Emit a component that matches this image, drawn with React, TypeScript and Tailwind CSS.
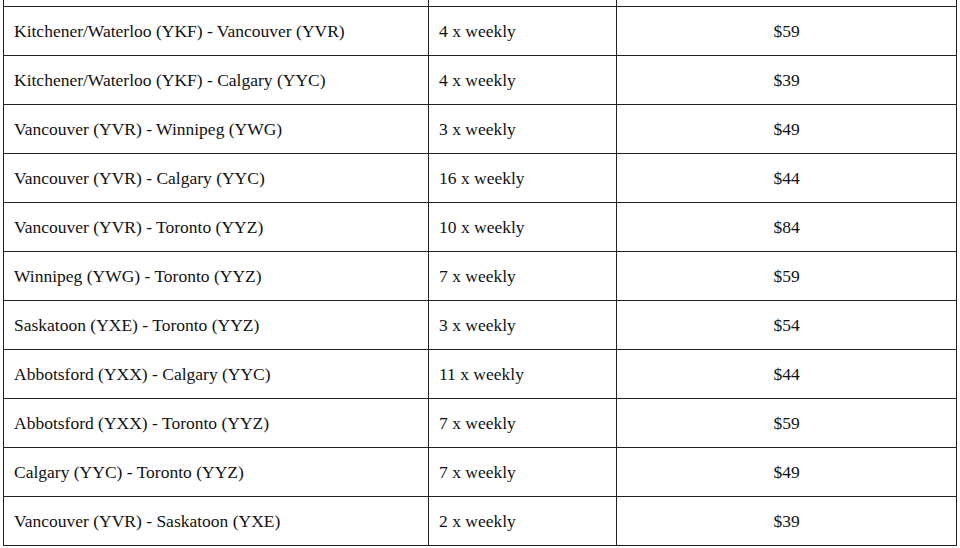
const routes: [string, string, string][] = [
  ['Kitchener/Waterloo (YKF) - Vancouver (YVR)', '4 x weekly', '$59'],
  ['Kitchener/Waterloo (YKF) - Calgary (YYC)', '4 x weekly', '$39'],
  ['Vancouver (YVR) - Winnipeg (YWG)', '3 x weekly', '$49'],
  ['Vancouver (YVR) - Calgary (YYC)', '16 x weekly', '$44'],
  ['Vancouver (YVR) - Toronto (YYZ)', '10 x weekly', '$84'],
  ['Winnipeg (YWG) - Toronto (YYZ)', '7 x weekly', '$59'],
  ['Saskatoon (YXE) - Toronto (YYZ)', '3 x weekly', '$54'],
  ['Abbotsford (YXX) - Calgary (YYC)', '11 x weekly', '$44'],
  ['Abbotsford (YXX) - Toronto (YYZ)', '7 x weekly', '$59'],
  ['Calgary (YYC) - Toronto (YYZ)', '7 x weekly', '$49'],
  ['Vancouver (YVR) - Saskatoon (YXE)', '2 x weekly', '$39'],
];

export default function App() {
  return (
    <div className="w-[960px] h-[548px] bg-white overflow-hidden text-[#111] font-['Liberation_Serif',serif]">
      <table className="ml-[3px] w-[953px] border-collapse text-[17.5px] leading-none table-fixed">
        <colgroup>
          <col className="w-[425px]" />
          <col className="w-[188px]" />
          <col className="w-[340px]" />
        </colgroup>
        <tbody>
          {/* tail of the row above, cut off by the viewport */}
          <tr className="h-[6px]">
            <td className="p-0 border-x border-[#222]"></td>
            <td className="p-0 border-x border-[#222]"></td>
            <td className="p-0 border-x border-[#222]"></td>
          </tr>
          {routes.map(([route, freq, price]) => (
            <tr key={route} className="h-[49px]">
              <td className="border border-[#222] pl-[10px] pr-2 pt-[3px] pb-0">{route}</td>
              <td className="border border-[#222] pl-[10px] pr-2 pt-[3px] pb-0">{freq}</td>
              <td className="border border-[#222] px-2 pt-[3px] pb-0 text-center">{price}</td>
            </tr>
          ))}
        </tbody>
      </table>
    </div>
  );
}
